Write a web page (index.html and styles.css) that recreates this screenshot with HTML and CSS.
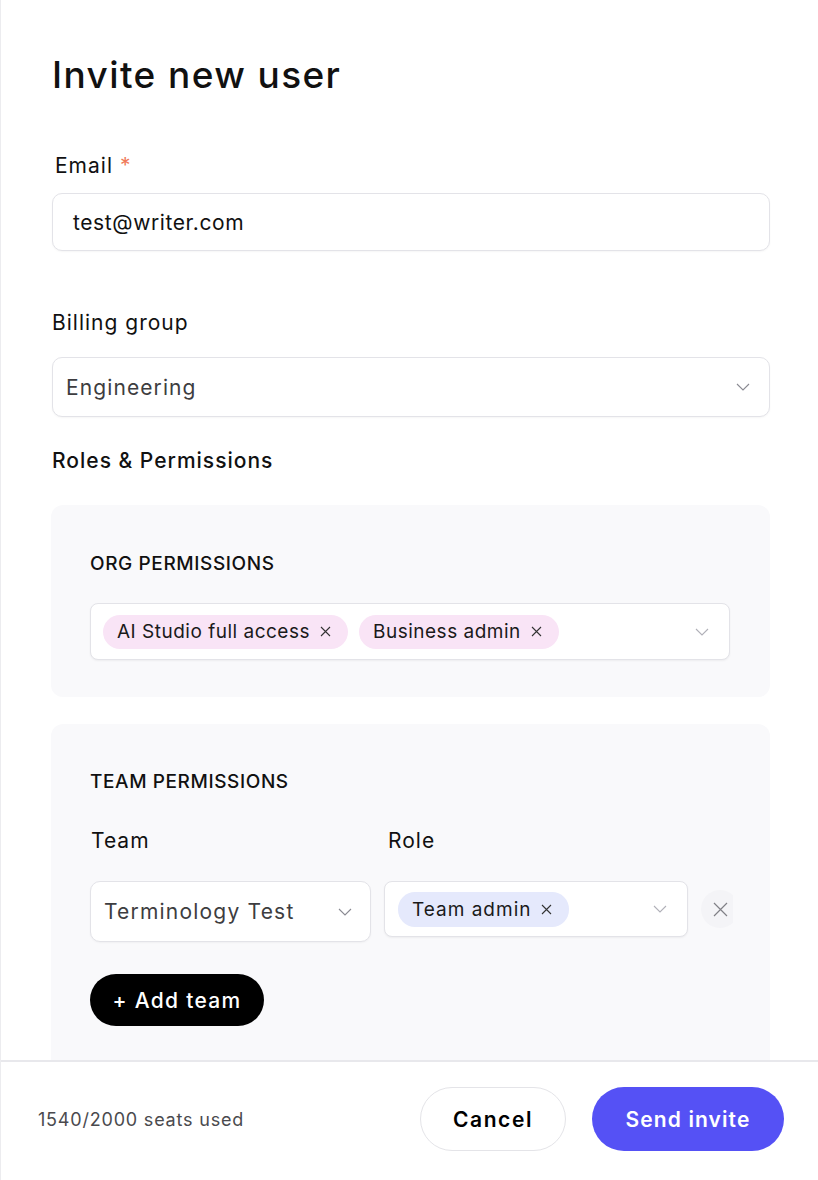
FILE: index.html
```html
<!DOCTYPE html>
<html>
<head>
  <meta charset="UTF-8" />
  <title>Invite new user</title>
  <link rel="stylesheet" href="styles.css">
</head>
<body>

  <div class="modal">
    <div class="content">
      <h1 class="title">Invite new user</h1>

      <!-- Email -->
      <label class="label label-email">Email <span class="req">*</span></label>
      <div class="field field-email">test@writer.com</div>

      <!-- Billing group -->
      <label class="label label-billing">Billing group</label>
      <div class="field field-select">
        <span class="value">Engineering</span>
        <svg class="chevron" width="14" height="8" viewBox="0 0 14 8"><path d="M1 1l6 6 6-6" fill="none" stroke="#8a8a92" stroke-width="1.1"/></svg>
      </div>

      <h2 class="section">Roles &amp; Permissions</h2>

      <!-- Org permissions -->
      <div class="panel panel-org">
        <div class="panel-title">ORG PERMISSIONS</div>
        <div class="multi">
          <span class="chip chip-pink">AI Studio full access
            <svg class="chip-x" width="11" height="11" viewBox="0 0 11 11"><path d="M1 1l9 9M10 1l-9 9" stroke="#333" stroke-width="1.1"/></svg>
          </span>
          <span class="chip chip-pink">Business admin
            <svg class="chip-x" width="11" height="11" viewBox="0 0 11 11"><path d="M1 1l9 9M10 1l-9 9" stroke="#333" stroke-width="1.1"/></svg>
          </span>
          <svg class="chevron chevron-end" width="14" height="8" viewBox="0 0 14 8"><path d="M1 1l6 6 6-6" fill="none" stroke="#b0b0b8" stroke-width="1.1"/></svg>
        </div>
      </div>

      <!-- Team permissions -->
      <div class="panel panel-team">
        <div class="panel-title">TEAM PERMISSIONS</div>
        <div class="team-grid">
          <div class="col-label">Team</div>
          <div class="col-label col-label-role">Role</div>
          <div></div>

          <div class="field team-select">
            <span class="value">Terminology Test</span>
            <svg class="chevron" width="14" height="8" viewBox="0 0 14 8"><path d="M1 1l6 6 6-6" fill="none" stroke="#8a8a92" stroke-width="1.1"/></svg>
          </div>
          <div class="multi role-select">
            <span class="chip chip-blue">Team admin
              <svg class="chip-x" width="11" height="11" viewBox="0 0 11 11"><path d="M1 1l9 9M10 1l-9 9" stroke="#333" stroke-width="1.1"/></svg>
            </span>
            <svg class="chevron chevron-end" width="14" height="8" viewBox="0 0 14 8"><path d="M1 1l6 6 6-6" fill="none" stroke="#b0b0b8" stroke-width="1.1"/></svg>
          </div>
          <div class="remove-wrap">
            <button class="remove">
              <svg width="15" height="15" viewBox="0 0 15 15"><path d="M1 1l13 13M14 1l-13 13" stroke="#808086" stroke-width="1.2"/></svg>
            </button>
          </div>
        </div>
        <button class="add-team">+ Add team</button>
      </div>
    </div>

    <!-- Footer -->
    <div class="footer">
      <span class="seats">1540/2000 seats used</span>
      <div class="actions">
        <button class="btn btn-cancel">Cancel</button>
        <button class="btn btn-send">Send invite</button>
      </div>
    </div>
  </div>

</body>
</html>
```

FILE: styles.css
```css
/* Page */
body {
  margin: 0;
  background: #fff;
  font-family: Inter, "Open Sans", sans-serif;
  color: #111;
}

.modal {
  height: 1180px;
  display: flex;
  flex-direction: column;
  border-left: 1px solid #ececef;
  box-sizing: border-box;
}

.content {
  height: 1060px;
  overflow: hidden;
  padding: 50px 48px 0 51px;
  box-sizing: border-box;
}

.title {
  margin: 0;
  font-size: 37px;
  line-height: 50px;
  font-weight: 500;
  letter-spacing: 1.4px;
}

/* Labels */
.label {
  display: block;
  font-size: 21px;
  line-height: 28px;
  letter-spacing: 1px;
}

.label-email {
  margin-top: 52px;
  padding-left: 3px;
}

.label-billing {
  margin-top: 58px;
}

.req {
  color: #f07a5a;
}

/* Input boxes */
.field {
  background: #fff;
  border: 1px solid #e3e3e8;
  border-radius: 10px;
  box-shadow: 0 1px 2px rgba(0, 0, 0, 0.04);
  box-sizing: border-box;
  display: flex;
  align-items: center;
}

.field-email {
  margin-top: 13px;
  height: 58px;
  padding-left: 20px;
  font-size: 21px;
  letter-spacing: 0.6px;
}

.field-select {
  margin-top: 20px;
  height: 60px;
  padding: 0 19px 0 13px;
  justify-content: space-between;
  font-size: 21px;
  letter-spacing: 1.1px;
}

.value {
  color: #3d3d40;
}

.section {
  margin: 30px 0 0 0;
  font-size: 21px;
  line-height: 28px;
  font-weight: 500;
  letter-spacing: 1px;
}

/* Grey panels */
.panel {
  background: #f9f9fb;
  border-radius: 12px;
  margin-left: -1px;
  padding: 47px 40px 37px 39px;
}

.panel-org {
  margin-top: 30px;
}

.panel-team {
  margin-top: 27px;
  padding-top: 46px;
  padding-bottom: 60px;
}

.panel-title {
  font-size: 19px;
  line-height: 24px;
  font-weight: 500;
  letter-spacing: 0.6px;
}

/* Multi select with chips */
.multi {
  background: #fff;
  border: 1px solid #e3e3e8;
  border-radius: 8px;
  box-shadow: 0 1px 2px rgba(0, 0, 0, 0.05);
  box-sizing: border-box;
  display: flex;
  align-items: center;
  gap: 11px;
  padding: 0 20px 0 12px;
}

.panel-org .multi {
  margin-top: 27px;
  height: 57px;
}

.chevron-end {
  margin-left: auto;
}

.chip {
  display: inline-flex;
  align-items: center;
  gap: 10px;
  height: 34px;
  padding: 0 17px 0 14px;
  border-radius: 17px;
  font-size: 19px;
  letter-spacing: 0.5px;
  color: #1a1a1a;
}

.chip-pink {
  background: #f9e4f6;
}

.chip-blue {
  background: #e5e9fc;
  height: 35px;
  letter-spacing: 1px;
}

/* Team row */
.team-grid {
  margin-top: 33px;
  display: grid;
  grid-template-columns: 281px 304px 32px;
  column-gap: 13px;
  row-gap: 26px;
  align-items: start;
}

.col-label {
  font-size: 21px;
  line-height: 28px;
  letter-spacing: 1px;
  padding-left: 1px;
}

.col-label-role {
  padding-left: 4px;
}

.team-select {
  height: 61px;
  padding: 0 18px 0 13px;
  justify-content: space-between;
  font-size: 21px;
  letter-spacing: 1.2px;
}

.role-select {
  height: 56px;
  padding-left: 13px;
}

/* Round remove button, clipped at the edge of its column */
.remove-wrap {
  width: 32px;
  height: 38px;
  margin-top: 9px;
  overflow: hidden;
}

.remove {
  width: 38px;
  height: 38px;
  border: none;
  border-radius: 50%;
  background: #f4f4f7;
  display: flex;
  align-items: center;
  justify-content: center;
  padding: 0;
}

.add-team {
  margin-top: 32px;
  height: 52px;
  width: 174px;
  border: none;
  border-radius: 26px;
  background: #000;
  color: #fff;
  font-family: Inter, "Open Sans", sans-serif;
  font-size: 21px;
  font-weight: 500;
  letter-spacing: 1.3px;
}

/* Footer */
.footer {
  flex: 1;
  border-top: 2px solid #e8e8ec;
  display: flex;
  align-items: center;
  justify-content: space-between;
  padding: 0 34px 4px 37px;
}

.seats {
  font-size: 18px;
  color: #4a4a4e;
  letter-spacing: 0.8px;
}

.actions {
  display: flex;
  gap: 26px;
}

.btn {
  height: 64px;
  border-radius: 32px;
  font-family: Inter, "Open Sans", sans-serif;
  font-size: 21px;
  font-weight: 600;
}

.btn-cancel {
  width: 146px;
  background: #fff;
  border: 1px solid #e4e4e8;
  color: #000;
  letter-spacing: 1.6px;
}

.btn-send {
  width: 192px;
  background: #5551f5;
  border: none;
  color: #fff;
  letter-spacing: 1.1px;
}
```
